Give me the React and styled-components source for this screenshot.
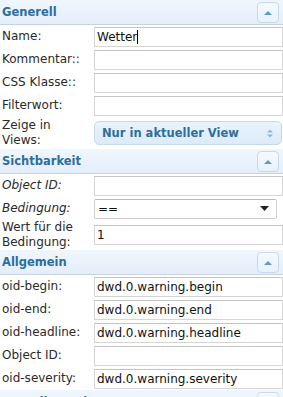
import React from "react";
import styled, { createGlobalStyle } from "styled-components";

const Global = createGlobalStyle`
  html, body { margin: 0; padding: 0; background: #fff; }
  body { font-family: "DejaVu Sans", Verdana, sans-serif; font-size: 12px; color: #222; }
  * { box-sizing: border-box; }
`;

const Panel = styled.div`
  width: 283px;
  height: 397px;
  overflow: hidden;
  background: #fff;
`;

const Header = styled.div`
  display: flex;
  align-items: center;
  justify-content: space-between;
  height: 25px;
  padding: 0 4px 0 2px;
  background: linear-gradient(#f0f6fd, #e4eefa);
  border-bottom: 1px solid #c9d2da;
  color: #2e6e9e;
  font-weight: bold;
  font-size: 11.5px;
`;

const CollapseButton = styled.div`
  width: 22px;
  height: 21px;
  border: 1px solid #c5dbec;
  border-radius: 4px;
  background: linear-gradient(#f6faff, #e8f1fb);
  display: flex;
  align-items: center;
  justify-content: center;
`;

const Row = styled.div`
  display: grid;
  grid-template-columns: 94px 1fr;
  align-items: center;
  height: ${(p) => p.$h || 23}px;
`;

const Label = styled.div`
  padding-left: 2px;
  line-height: 15px;
  color: #2a2a2a;
  font-style: ${(p) => (p.$italic ? "italic" : "normal")};
`;

const TextInput = styled.input`
  height: 20px;
  width: 189px;
  border: 1px solid #d6d6d6;
  border-top-color: #c4c4c4;
  padding: 0 2px;
  font-family: "DejaVu Sans", Verdana, sans-serif;
  font-size: 12px;
  color: #111;
  background: #fff;
  outline: none;
`;

const FakeInput = styled.div`
  height: 20px;
  width: 189px;
  border: 1px solid #d6d6d6;
  border-top-color: #c4c4c4;
  padding: 0 2px;
  display: flex;
  align-items: center;
  color: #111;
`;

const Caret = styled.span`
  display: inline-block;
  width: 1px;
  height: 14px;
  background: #000;
`;

const UiSelect = styled.div`
  height: 24px;
  width: 188px;
  border: 1px solid #c5dbec;
  border-radius: 5px;
  background: linear-gradient(#e9f3fc, #dcebf9);
  color: #2e6e9e;
  font-weight: bold;
  font-size: 11.5px;
  display: flex;
  align-items: center;
  justify-content: space-between;
  padding: 0 8px 0 7px;
`;

const NativeSelect = styled.div`
  height: 20px;
  width: 183px;
  border: 1px solid #cfcfcf;
  border-top-color: #bcbcbc;
  border-radius: 2px;
  background: #fff;
  display: flex;
  align-items: center;
  justify-content: space-between;
  padding: 0 7px 0 3px;
  color: #111;
`;

const UpTriangle = () => (
  <svg width="8" height="5" viewBox="0 0 8 5">
    <path d="M0 5 L4 1 L8 5 Z" fill="#5b9bd1" />
  </svg>
);

const UpDown = () => (
  <svg width="6" height="9" viewBox="0 0 6 9">
    <path d="M0 3.5 L3 0.5 L6 3.5 Z" fill="#8eb6d8" />
    <path d="M0 5.5 L3 8.5 L6 5.5 Z" fill="#8eb6d8" />
  </svg>
);

const DownTriangle = () => (
  <svg width="9" height="5" viewBox="0 0 9 5">
    <path d="M0 0 L9 0 L4.5 5 Z" fill="#222" />
  </svg>
);

const Section = ({ title }) => (
  <Header>
    <span>{title}</span>
    <CollapseButton>
      <UpTriangle />
    </CollapseButton>
  </Header>
);

const Field = ({ label, value = "", italic, h }) => (
  <Row $h={h}>
    <Label $italic={italic}>{label}</Label>
    <TextInput readOnly value={value} />
  </Row>
);

export default function App() {
  return (
    <>
      <Global />
      <Panel>
        <Section title="Generell" />
        <Row>
          <Label>Name:</Label>
          <FakeInput>
            Wetter
            <Caret />
          </FakeInput>
        </Row>
        <Field label="Kommentar::" />
        <Field label="CSS Klasse::" />
        <Field label="Filterwort:" />
        <Row $h={32}>
          <Label>
            Zeige in
            <br />
            Views:
          </Label>
          <UiSelect>
            <span>Nur in aktueller View</span>
            <UpDown />
          </UiSelect>
        </Row>
        <Section title="Sichtbarkeit" />
        <Field label="Object ID:" italic />
        <Row>
          <Label $italic>Bedingung:</Label>
          <NativeSelect>
            <span>==</span>
            <DownTriangle />
          </NativeSelect>
        </Row>
        <Field label={<>Wert für die<br />Bedingung:</>} value="1" h={30} />
        <Section title="Allgemein" />
        <Field label="oid-begin:" value="dwd.0.warning.begin" />
        <Field label="oid-end:" value="dwd.0.warning.end" />
        <Field label="oid-headline:" value="dwd.0.warning.headline" />
        <Field label="Object ID:" />
        <Field label="oid-severity:" value="dwd.0.warning.severity" />
        <Section title="CSS Allgemein" />
      </Panel>
    </>
  );
}
